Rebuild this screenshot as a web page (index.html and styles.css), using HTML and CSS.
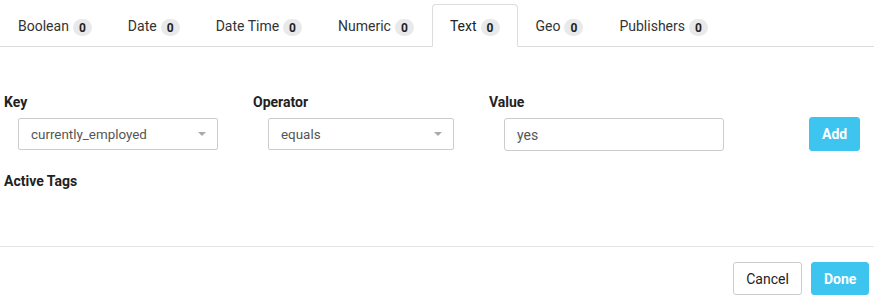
FILE: index.html
```html
<!DOCTYPE html>
<html lang="en">
<head>
    <meta charset="UTF-8">
    <meta name="viewport" content="width=device-width, initial-scale=1.0">
    <title>Tags</title>
    <link rel="stylesheet" href="styles.css">
</head>
<body>
    <div class="tag-modal">
        <ul class="tabs">
            <li><a class="tab-link">Boolean <span class="badge">0</span></a></li>
            <li><a class="tab-link">Date <span class="badge">0</span></a></li>
            <li><a class="tab-link">Date Time <span class="badge">0</span></a></li>
            <li><a class="tab-link">Numeric <span class="badge">0</span></a></li>
            <li><a class="tab-link active">Text <span class="badge">0</span></a></li>
            <li><a class="tab-link">Geo <span class="badge">0</span></a></li>
            <li><a class="tab-link">Publishers <span class="badge">0</span></a></li>
        </ul>

        <div class="modal-body">
            <div class="tag-row">
                <div class="field field-key">
                    <label>Key</label>
                    <div class="select select-key">
                        <span>currently_employed</span>
                        <span class="caret"></span>
                    </div>
                </div>
                <div class="field field-operator">
                    <label>Operator</label>
                    <div class="select select-operator">
                        <span>equals</span>
                        <span class="caret"></span>
                    </div>
                </div>
                <div class="field field-value">
                    <label for="tag-value">Value</label>
                    <input type="text" id="tag-value" class="value-input" value="yes">
                </div>
                <button class="btn btn-primary btn-add">Add</button>
            </div>

            <h4 class="section-title">Active Tags</h4>
        </div>

        <div class="modal-footer">
            <button class="btn btn-default">Cancel</button>
            <button class="btn btn-primary">Done</button>
        </div>
    </div>
</body>
</html>
```

FILE: styles.css
```css
body {
    margin: 0;
    padding: 0;
    background-color: #fff;
    font-family: Roboto, "Liberation Sans", Arial, sans-serif;
    font-size: 14px;
    color: #222;
}

.tabs {
    display: flex;
    list-style: none;
    margin: 0;
    padding: 4px 0 0 0;
    border-bottom: 1px solid #ddd;
}

.tab-link {
    display: block;
    box-sizing: border-box;
    height: 43px;
    margin-bottom: -1px;
    padding: 11px 17px 0;
    line-height: 20px;
    color: #333;
    border: 1px solid transparent;
    border-radius: 4px 4px 0 0;
    cursor: pointer;
    white-space: nowrap;
}

.tab-link.active {
    color: #222;
    background-color: #fff;
    border-color: #ddd #ddd #fff;
}

.badge {
    display: inline-block;
    min-width: 19px;
    height: 17px;
    margin-left: 0.5px;
    border-radius: 9px;
    background-color: #e9e9e9;
    color: #222;
    font-size: 12px;
    font-weight: bold;
    line-height: 18px;
    text-align: center;
    vertical-align: middle;
}

.modal-body {
    padding: 45px 14px 0 4px;
}

.tag-row {
    display: flex;
    align-items: flex-start;
}

.field label {
    display: block;
    height: 20px;
    margin-bottom: 6px;
    line-height: 20px;
    font-weight: bold;
    color: #222;
}

.field-key {
    width: 249px;
}

.field-operator {
    width: 236px;
}

.select {
    display: flex;
    align-items: center;
    justify-content: space-between;
    box-sizing: border-box;
    height: 32px;
    padding: 0 11px 0 12px;
    border: 1px solid #ccc;
    border-radius: 2px;
    color: #555;
    font-size: 13.4px;
}

.select-key {
    width: 200px;
    margin-left: 14px;
}

.select-operator {
    width: 186px;
    margin-left: 15px;
}

.caret {
    width: 0;
    height: 0;
    border-left: 4px solid transparent;
    border-right: 4px solid transparent;
    border-top: 4px solid #aaa;
}

.value-input {
    box-sizing: border-box;
    width: 220px;
    height: 33px;
    margin: 0 0 0 15px;
    padding: 0 12px;
    border: 1px solid #ccc;
    border-radius: 3px;
    font-family: inherit;
    font-size: 14px;
    color: #555;
}

.btn {
    box-sizing: border-box;
    height: 33px;
    padding: 0 12px;
    border: 1px solid transparent;
    border-radius: 3px;
    font-family: inherit;
    font-size: 14px;
    cursor: pointer;
}

.btn-primary {
    background-color: #3ec5ef;
    border-color: #3ec5ef;
    color: #fff;
    font-weight: bold;
}

.btn-default {
    background-color: #fff;
    border-color: #ccc;
    color: #222;
}

.btn-add {
    width: 51px;
    height: 34px;
    margin-top: 25px;
    margin-left: auto;
}

.section-title {
    margin: 20px 0 55px;
    font-size: 14px;
    line-height: 20px;
    font-weight: bold;
    color: #222;
}

.modal-footer {
    display: flex;
    justify-content: flex-end;
    gap: 9px;
    padding: 15px 5px 0 0;
    border-top: 1px solid #e5e5e5;
}

.modal-footer .btn-default {
    width: 69px;
}

.modal-footer .btn-primary {
    width: 58px;
}
```
